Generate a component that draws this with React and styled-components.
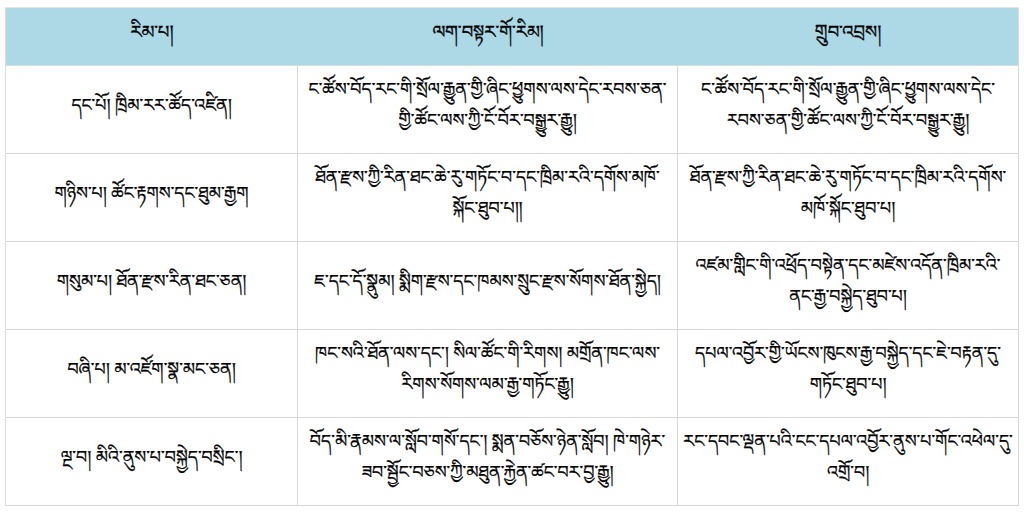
import styled, { createGlobalStyle } from "styled-components"

const GlobalStyle = createGlobalStyle`
    body {
        margin: 0;
        padding: 7px 5px;
        background: #ffffff;
        font-family: "Noto Serif Tibetan", "Noto Sans Tibetan", "Jomolhari", "Microsoft Himalaya", "Noto Sans", sans-serif;
    }
`

const Grid = styled.div`
    width: 1013px;
    display: grid;
    grid-template-columns: 292px 380px 341px;
    grid-auto-rows: 88px;
    grid-template-rows: 58px;
    border-left: 1px solid #dcdcdc;
    border-top: 1px solid #e4e4e4;
    color: #000000;
`

const Head = styled.div`
    background-color: #add8e6;
    display: flex;
    align-items: center;
    justify-content: center;
    padding: 0 8px;
    font-size: 18px;
    -webkit-text-stroke: 0.3px #000;
    border-bottom: 1px solid #d4dde0;
    border-right: ${(p) => (p.$last ? "1px solid #dcdcdc" : "none")};
`

const Cell = styled.div`
    display: flex;
    flex-direction: column;
    align-items: center;
    justify-content: center;
    gap: 1px;
    padding: 0 4px;
    font-size: 17.5px;
    line-height: 30px;
    text-align: center;
    -webkit-text-stroke: 0.25px #000;
    border-right: 1px solid #d8d8d8;
    border-bottom: 1px solid #d8d8d8;
`

const Line = styled.span`
    display: block;
    white-space: nowrap;
`

const headers = ["རིམ་པ།", "ལག་བསྟར་གོ་རིམ།", "གྲུབ་འབྲས།"]

const rows = [
    [
        ["དང་པོ། ཁྲིམ་རར་ཚོད་འཛིན།"],
        ["ང་ཚོས་བོད་རང་གི་སྲོལ་རྒྱུན་གྱི་ཞིང་ཕྱུགས་ལས་དེང་རབས་ཅན་", "གྱི་ཚོང་ལས་ཀྱི་ངོ་བོར་བསྒྱུར་རྒྱུ།"],
        ["ང་ཚོས་བོད་རང་གི་སྲོལ་རྒྱུན་གྱི་ཞིང་ཕྱུགས་ལས་དེང་", "རབས་ཅན་གྱི་ཚོང་ལས་ཀྱི་ངོ་བོར་བསྒྱུར་རྒྱུ།"],
    ],
    [
        ["གཉིས་པ། ཚོང་རྟགས་དང་ཐུམ་རྒྱག"],
        ["ཐོན་རྫས་ཀྱི་རིན་ཐང་ཆེ་རུ་གཏོང་བ་དང་ཁྲིམ་རའི་དགོས་མཁོ་", "སྐོང་ཐུབ་པ།།"],
        ["ཐོན་རྫས་ཀྱི་རིན་ཐང་ཆེ་རུ་གཏོང་བ་དང་ཁྲིམ་རའི་དགོས་", "མཁོ་སྐོང་ཐུབ་པ།"],
    ],
    [
        ["གསུམ་པ། ཐོན་རྫས་རིན་ཐང་ཅན།"],
        ["ཇ་དང་དོ་སྣུམ། སྨིག་རྫས་དང་ཁམས་སྲུང་རྫས་སོགས་ཐོན་སྐྱེད།"],
        ["འཛམ་གླིང་གི་འཕྲོད་བསྟེན་དང་མཛེས་འདོན་ཁྲིམ་རའི་", "ནང་རྒྱ་བསྐྱེད་ཐུབ་པ།"],
    ],
    [
        ["བཞི་པ། མ་འཛོག་སྣ་མང་ཅན།"],
        ["ཁང་སའི་ཐོན་ལས་དང་། སིལ་ཚོང་གི་རིགས། མགྲོན་ཁང་ལས་", "རིགས་སོགས་ལམ་རྒྱ་གཏོང་རྒྱུ།"],
        ["དཔལ་འབྱོར་གྱི་ཡོངས་ཁུངས་རྒྱ་བསྐྱེད་དང་ཇེ་བརྟན་དུ་", "གཏོང་ཐུབ་པ།"],
    ],
    [
        ["ལྔ་བ། མིའི་ནུས་པ་བསྐྱེད་བསྲིང་།"],
        ["བོད་མི་རྣམས་ལ་སློབ་གསོ་དང་། སྨན་བཅོས་ཉེན་སློབ། ཁེ་གཉེར་", "ཟབ་སྦྱོང་བཅས་ཀྱི་མཐུན་རྐྱེན་ཚང་བར་བྱ་རྒྱུ།"],
        ["རང་དབང་ལྡན་པའི་ངང་དཔལ་འབྱོར་ནུས་པ་གོང་འཕེལ་དུ་", "འགྲོ་བ།"],
    ],
]

const App = () => {
    return (
        <>
            <GlobalStyle />
            <Grid>
                {headers.map((h, i) => (
                    <Head key={h} $last={i === headers.length - 1}>{h}</Head>
                ))}
                {rows.map((r, i) =>
                    r.map((lines, j) => (
                        <Cell key={`${i}-${j}`}>
                            {lines.map((l) => (
                                <Line key={l}>{l}</Line>
                            ))}
                        </Cell>
                    ))
                )}
            </Grid>
        </>
    )
}

export default App
